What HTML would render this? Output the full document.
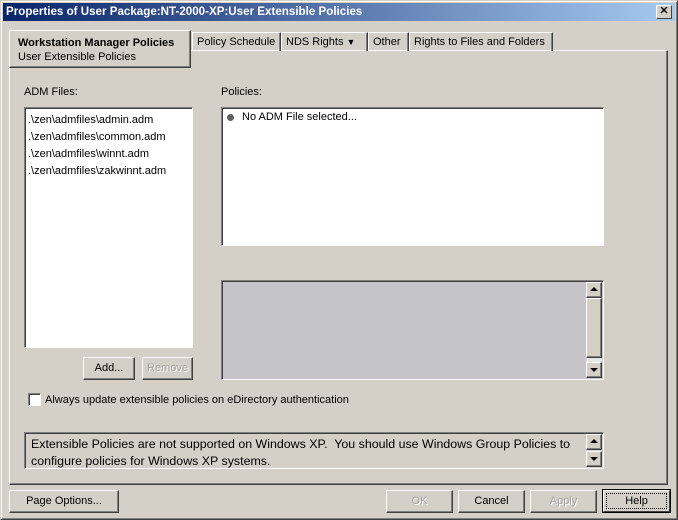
<!DOCTYPE html>
<html><head><style>
*{box-sizing:border-box;margin:0;padding:0}
body{width:678px;height:520px;background:#d4d0c8;font-family:"Liberation Sans",Arial,sans-serif;font-size:11px;color:#000;position:relative;overflow:hidden}
.a{position:absolute}
.win{left:0;top:0;width:678px;height:520px;border:1px solid;border-color:#d4d0c8 #404040 #404040 #d4d0c8;box-shadow:inset 1px 1px 0 #fff,inset -1px -1px 0 #808080}
.title{left:3px;top:3px;width:672px;height:18px;background:linear-gradient(to right,#0a246a,#a6caf0);color:#fff;font-weight:bold;font-size:11.6px;line-height:18px;padding-left:3px}
.close{left:656px;top:5px;width:16px;height:14px;background:#d4d0c8;border:1px solid;border-color:#fff #404040 #404040 #fff;font-size:11px;line-height:11px;text-align:center;color:#000;font-weight:bold}
.raised{border:1px solid;border-color:#fff #404040 #404040 #fff;box-shadow:inset -1px -1px 0 #808080}
.sunk{border:1px solid;border-color:#808080 #fff #fff #808080;box-shadow:inset 1px 1px 0 #404040}
.tab{top:32px;height:19px;border:1px solid;border-bottom:none;border-color:#fff #404040 #404040 #fff;box-shadow:inset -1px 0 0 #808080;line-height:19px;padding-left:4px;white-space:nowrap}
.btn{height:23px;text-align:center;line-height:21px;background:#d4d0c8}
.dis{color:#a0a0a0;text-shadow:1px 1px 0 #fff}
.sb{width:16px;height:16px;background:#d4d0c8;border:1px solid;border-color:#fff #404040 #404040 #fff;box-shadow:inset -1px -1px 0 #808080}
.up:after,.dn:after{content:"";position:absolute;left:3px;border-left:4px solid transparent;border-right:4px solid transparent}
.up:after{top:4px;border-bottom:4px solid #000}
.dn:after{top:5px;border-top:4px solid #000}
</style></head><body>
<div class="a win"></div>
<div class="a title">Properties of User Package:NT-2000-XP:User Extensible Policies</div>
<div class="a close">✕</div>

<div class="a" style="left:9px;top:50px;width:659px;height:435px;border:1px solid;border-color:#fff #404040 #404040 #fff;box-shadow:inset -1px -1px 0 #808080"></div>

<div class="a tab" style="left:192px;width:89px">Policy Schedule</div>
<div class="a tab" style="left:281px;width:87px">NDS Rights <span style="font-size:9px">▼</span></div>
<div class="a tab" style="left:368px;width:41px">Other</div>
<div class="a tab" style="left:409px;width:144px">Rights to Files and Folders</div>
<div class="a" style="left:9px;top:30px;width:182px;height:38px;background:#d4d0c8;border:1px solid;border-color:#fff #404040 #404040 #fff;box-shadow:inset -1px -1px 0 #808080;padding:5px 0 0 8px;line-height:14px">
<b>Workstation Manager Policies</b><br>User Extensible Policies</div>

<div class="a" style="left:24px;top:86px">ADM Files:</div>
<div class="a sunk" style="left:24px;top:107px;width:169px;height:241px;background:#fff;padding:4px 0 0 3px;line-height:17px">.\zen\admfiles\admin.adm<br>.\zen\admfiles\common.adm<br>.\zen\admfiles\winnt.adm<br>.\zen\admfiles\zakwinnt.adm</div>

<div class="a" style="left:221px;top:86px">Policies:</div>
<div class="a sunk" style="left:221px;top:107px;width:383px;height:139px;background:#fff"></div>
<div class="a" style="left:227px;top:114px;width:7px;height:7px;border-radius:50%;background:#606060"></div>
<div class="a" style="left:242px;top:111px">No ADM File selected...</div>

<div class="a sunk" style="left:221px;top:280px;width:383px;height:100px;background:#c5c4c8"></div>
<div class="a" style="left:586px;top:282px;width:16px;height:96px;background:#e8e6e2"></div>
<div class="a sb up" style="left:586px;top:282px"></div>
<div class="a sb" style="left:586px;top:298px;height:60px"></div>
<div class="a sb dn" style="left:586px;top:362px"></div>

<div class="a raised btn" style="left:83px;top:357px;width:52px">Add...</div>
<div class="a raised btn dis" style="left:142px;top:357px;width:51px">Remove</div>

<div class="a sunk" style="left:28px;top:393px;width:13px;height:13px;background:#fff"></div>
<div class="a" style="left:45px;top:394px">Always update extensible policies on eDirectory authentication</div>

<div class="a sunk" style="left:24px;top:432px;width:580px;height:37px;padding:3px 0 0 6px;line-height:17px;font-size:12.4px;white-space:nowrap">Extensible Policies are not supported on Windows XP.&nbsp; You should use Windows Group Policies to<br>configure policies for Windows XP systems.</div>
<div class="a sb up" style="left:586px;top:434px"></div>
<div class="a sb dn" style="left:586px;top:451px"></div>

<div class="a raised btn" style="left:9px;top:490px;width:110px">Page Options...</div>
<div class="a raised btn dis" style="left:386px;top:490px;width:67px">OK</div>
<div class="a raised btn" style="left:458px;top:490px;width:67px">Cancel</div>
<div class="a raised btn dis" style="left:530px;top:490px;width:67px">Apply</div>
<div class="a btn" style="left:602px;top:489px;width:69px;height:24px;border:1px solid #000;"><div style="margin:0;height:22px;border:1px solid;border-color:#fff #404040 #404040 #fff;padding:2px"><div style="border:1px dotted #000;height:16px;line-height:14px">Help</div></div></div>
</body></html>
